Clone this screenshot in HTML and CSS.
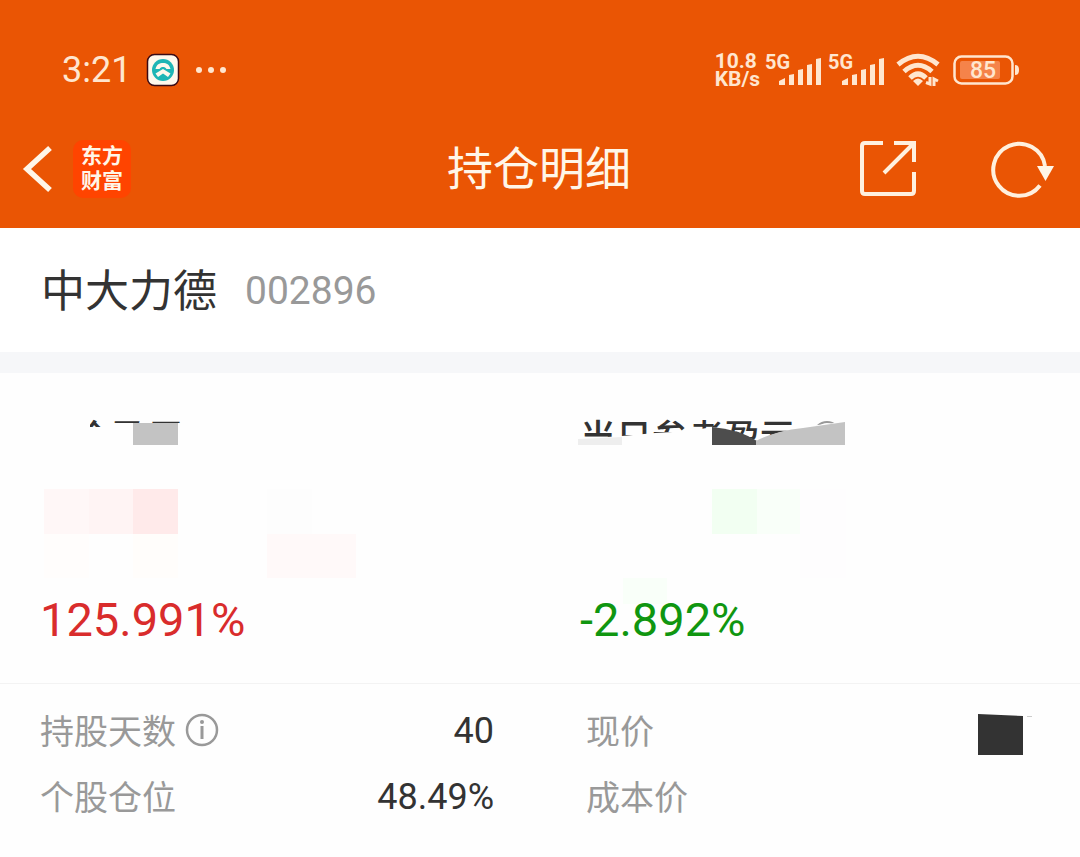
FILE: index.html
```html
<!DOCTYPE html>
<html lang="zh-CN">

<head>
    <meta charset="UTF-8">
    <meta name="viewport" content="width=device-width, initial-scale=1.0">
    <title>持仓明细</title>
    <link rel="stylesheet" href="styles.css">
</head>

<body>
    <header class="header">
        <div class="status">
            <div class="status_left">
                <span class="time">3:21</span>
                <svg class="app_icon" width="34" height="34" viewBox="0 0 34 34">
                    <rect x="1.5" y="1.5" width="31" height="31" rx="7" fill="#fff8ec" stroke="#3a0a14" stroke-width="1.5" />
                    <circle cx="17" cy="17" r="11" fill="#1fb5b5" />
                    <path d="M9.500 16C10.500 11.500 13.500 10 17 10S23.500 11.500 24.500 16H20.500C19.500 14.500 18.500 14 17 14S14.500 14.500 13.500 16Z" fill="#fff8ec" />
                    <path d="M17 16L24.500 20.500L22 24L17 20.500L12 24L9.500 20.500Z" fill="#fff8ec" />
                </svg>
                <svg width="32" height="8" viewBox="0 0 32 8" fill="#ffe6cf">
                    <circle cx="4" cy="4" r="3" />
                    <circle cx="16" cy="4" r="3" />
                    <circle cx="28" cy="4" r="3" />
                </svg>
            </div>
            <div class="status_right">
                <div class="speed">
                    <span>10.8</span>
                    <span>KB/s</span>
                </div>
                <svg class="signal" width="58" height="36" viewBox="0 -1 58 36">
                    <text x="0" y="16">5G</text>
                    <path d="M14 32V28L20 25V32ZM24 22L29 21V32H24ZM33 17L38 16V32H33ZM42 12L47 11V32H42ZM51 6L56 5V32H51Z" />
                </svg>
                <svg class="signal" width="58" height="36" viewBox="0 -1 58 36">
                    <text x="0" y="16">5G</text>
                    <path d="M14 32V28L20 25V32ZM24 22L29 21V32H24ZM33 17L38 16V32H33ZM42 12L47 11V32H42ZM51 6L56 5V32H51Z" />
                </svg>
                <svg class="wifi" width="44" height="34" viewBox="0 0 44 34">
                    <g fill="none" stroke="#ffe6cf" stroke-width="5">
                        <path d="M2 11.500Q22 -5 42 11.500" />
                        <path d="M8 18.500Q22 6 36 18.500" />
                        <path d="M14 25Q22 17 30 25" />
                    </g>
                    <path d="M17 28Q22 23 27 28L22 33Z" fill="#ffe6cf" />
                    <path d="M30 29.500L34 31V24M38 33V26L42 28" fill="none" stroke="#ffe6cf" stroke-width="3" />
                </svg>
                <svg class="battery" width="66" height="32" viewBox="0 0 66 32">
                    <rect x="1.500" y="2.500" width="58" height="27" rx="7" fill="none" stroke="#ffe6cf" stroke-width="2.500" />
                    <rect x="7" y="7" width="40" height="18" rx="2" fill="#f5834a" />
                    <path d="M62 11Q66 11 66 16T62 21Z" fill="#ffe6cf" />
                    <text x="30" y="24">85</text>
                </svg>
            </div>
        </div>
        <nav class="nav">
            <div class="nav_left">
                <button class="icon_btn" aria-label="返回">
                    <svg width="30" height="48" viewBox="0 0 30 48">
                        <path d="M27 3L4 24L27 45" fill="none" stroke="#fff6e8" stroke-width="5.500" />
                    </svg>
                </button>
                <a class="logo" href="#">东方<br>财富</a>
            </div>
            <h1 class="title">持仓明细</h1>
            <div class="nav_right">
                <button class="icon_btn" aria-label="分享">
                    <svg width="58" height="58" viewBox="0 0 58 58" fill="none" stroke="#fff0de" stroke-width="4">
                        <path d="M24 3H6Q3 3 3 6V51Q3 54 6 54H52Q55 54 55 51V32" />
                        <path d="M35 3H55V22M54 4L25 33" />
                    </svg>
                </button>
                <button class="icon_btn" aria-label="刷新">
                    <svg width="64" height="58" viewBox="0 0 64 58">
                        <path d="M49 45.500A26 26 0 1 1 54 26" fill="none" stroke="#fff0de" stroke-width="4" />
                        <path d="M46 26H63L54.500 41Z" fill="#fff6e8" />
                    </svg>
                </button>
            </div>
        </nav>
    </header>

    <section class="stock">
        <h2 class="stock_name">中大力德</h2>
        <span class="stock_code">002896</span>
    </section>

    <section class="profit">
        <div class="panel">
            <div class="panel_label indent">仓盈亏</div>
            <div class="percent red">125.991%</div>
            <!-- mosaic over label and amount -->
            <svg class="mosaic" width="400" height="220" viewBox="0 0 400 220">
                <path d="M36 40H90V54H113V50L133 50H190V90H36Z" fill="#fefefe" />
                <rect x="133" y="50" width="45" height="22" fill="#c3c3c3" />
                <rect x="44" y="116" width="45" height="45" fill="#fff7f7" />
                <rect x="89" y="116" width="44" height="45" fill="#fff4f4" />
                <rect x="133" y="116" width="45" height="45" fill="#ffeaea" />
                <rect x="267" y="116" width="45" height="45" fill="#fdfdfd" />
                <rect x="44" y="161" width="45" height="44" fill="#fffdfc" />
                <rect x="133" y="161" width="45" height="44" fill="#fffdfb" />
                <rect x="267" y="161" width="89" height="44" fill="#fff9f9" />
            </svg>
        </div>
        <div class="panel">
            <div class="panel_label">
                当日参考盈亏
                <svg width="30" height="38" viewBox="0 0 30 38">
                    <circle cx="15" cy="15" r="13" fill="none" stroke="#999" stroke-width="2" />
                </svg>
            </div>
            <div class="percent green">-2.892%</div>
            <svg class="mosaic" width="400" height="220" viewBox="0 0 400 220">
                <path d="M36 66L82 63L115 60L150 58L172 54Q195 56 216 68Q245 54 305 49V90H36Z" fill="#fefefe" />
                <path d="M38 66L82 64V72H38Z" fill="#eee" />
                <path d="M172 54Q198 56 217 68V72H172Z" fill="#4d4d4d" />
                <path d="M216 68Q235 58 263 55L305 49V72H216Z" fill="#c3c3c3" />
                <rect x="172" y="116" width="45" height="45" fill="#f2fff2" />
                <rect x="217" y="116" width="43" height="45" fill="#f9fff9" />
                <rect x="260" y="116" width="46" height="89" fill="#fefdfe" />
                <rect x="83" y="205" width="44" height="26" fill="#f9fff9" />
            </svg>
        </div>
    </section>

    <dl class="details">
        <div class="row">
            <dt>
                持股天数
                <svg class="info" width="34" height="34" viewBox="0 0 34 34">
                    <circle cx="17" cy="18" r="15" fill="none" stroke="#999" stroke-width="2.500" />
                    <circle cx="17" cy="10" r="2" fill="#999" />
                    <path d="M17 14V27" stroke="#999" stroke-width="3" />
                </svg>
            </dt>
            <dd>40</dd>
        </div>
        <div class="row">
            <dt>现价</dt>
            <dd>
                <svg width="56" height="50" viewBox="0 0 56 50">
                    <path d="M0 8L45 10V49H0Z" fill="#333" />
                    <path d="M49 10.500H54" stroke="#ccc" />
                </svg>
            </dd>
        </div>
        <div class="row">
            <dt>个股仓位</dt>
            <dd>48.49%</dd>
        </div>
        <div class="row">
            <dt>成本价</dt>
            <dd></dd>
        </div>
    </dl>
</body>

</html>
```
FILE: styles.css
```css
body {
    margin: 0;
    background-color: #fefefe;
    color: #333;
    font-family: Roboto, "Noto Sans CJK SC", sans-serif;
}

svg {
    display: block;
    flex: none;
    overflow: visible;
}

h1,
h2,
dl,
dd {
    margin: 0;
    font-weight: 400;
}

.header {
    background-color: #ea5504;
    color: #fff6e8;
}

.status {
    display: flex;
    justify-content: space-between;
    align-items: center;
    height: 80px;
    padding: 30px 61px 0 62px;
    color: #ffe6cf;
}

.status_left {
    display: flex;
    align-items: center;
}

.time {
    font-size: 36px;
    line-height: 40px;
}

.app_icon {
    margin: 0 15px;
}

.status_right {
    display: flex;
    align-items: center;
    gap: 5px;
}

.speed {
    display: flex;
    flex-direction: column;
    font-size: 21px;
    font-weight: 700;
    line-height: 18px;
}

.signal {
    fill: #ffe6cf;
    font-size: 20px;
    font-weight: 700;
}

.wifi {
    margin-left: 5px;
}

.battery {
    margin-left: 8px;
    fill: #ffe6cf;
    font-size: 23px;
    font-weight: 500;
    text-anchor: middle;
}

.nav {
    display: grid;
    grid-template-columns: 1fr auto 1fr;
    align-items: center;
    height: 118px;
    padding: 0 25px 0 23px;
}

.nav_left {
    display: flex;
    align-items: center;
    gap: 20px;
}

.nav_right {
    display: flex;
    align-items: center;
    justify-content: flex-end;
    gap: 74px;
}

.icon_btn {
    padding: 0;
    border: none;
    background: none;
    cursor: pointer;
}

.logo {
    padding: 4px 8px;
    border-radius: 10px;
    background-color: #ff4400;
    color: #fff6e8;
    font-size: 21px;
    font-weight: 700;
    line-height: 25px;
    text-decoration: none;
}

.title {
    font-size: 46px;
    line-height: 60px;
}

.stock {
    display: flex;
    align-items: center;
    gap: 28px;
    height: 124px;
    padding: 0 41px;
    background-color: #fff;
    border-bottom: 21px solid #f6f7f9;
}

.stock_name {
    padding-bottom: 4px;
    font-size: 44px;
}

.stock_code {
    padding-top: 2px;
    color: #999;
    font-size: 39px;
}

.profit {
    display: grid;
    grid-template-columns: 1fr 1fr;
    border-bottom: 1px solid #f3f3f3;
}

.panel {
    position: relative;
    padding: 44px 40px 33px;
}

.panel_label {
    display: flex;
    align-items: center;
    gap: 16px;
    height: 44px;
    font-size: 36px;
    font-weight: 500;
    line-height: 44px;
}

.indent {
    padding-left: 36px;
}

.percent {
    position: relative;
    z-index: 1;
    margin-top: 129px;
    font-size: 47px;
    line-height: 60px;
}

.red {
    color: #d92c2c;
}

.green {
    color: #109610;
}

.mosaic {
    position: absolute;
    top: 0;
    left: 0;
}

.details {
    display: grid;
    grid-template-columns: 1fr 1fr;
    padding: 14px 0;
}

.row {
    display: flex;
    justify-content: space-between;
    align-items: center;
    height: 66px;
    padding: 0 46px 0 40px;
}

.row:nth-child(even) {
    padding-left: 46px;
}

.row dt {
    display: flex;
    align-items: center;
    gap: 9px;
    padding-bottom: 4px;
    color: #999;
    font-size: 34px;
}

.row dd {
    font-size: 36px;
}
```
